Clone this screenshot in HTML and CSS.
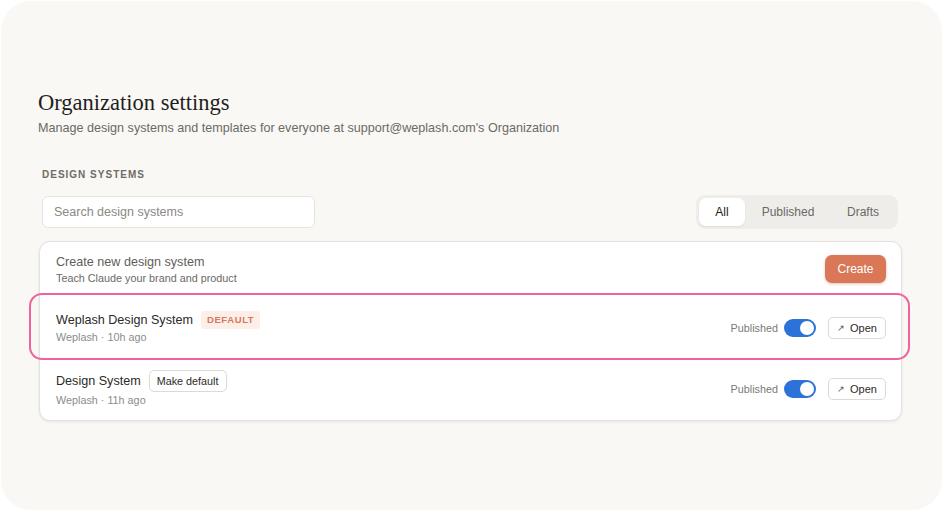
FILE: index.html
```html
<!DOCTYPE html>
<html lang="en">
<head>
<meta charset="utf-8">
<title>Organization settings</title>
<link rel="stylesheet" href="styles.css">
</head>
<body>
<div class="frame">
  <main class="content">
    <header class="page-head">
      <h1 class="title">Organization settings</h1>
      <p class="subtitle">Manage design systems and templates for everyone at support@weplash.com's Organization</p>
    </header>
    <h2 class="section-label">DESIGN SYSTEMS</h2>
    <div class="toolbar">
      <div class="search">Search design systems</div>
      <div class="tabs">
        <span class="tab active">All</span>
        <span class="tab">Published</span>
        <span class="tab">Drafts</span>
      </div>
    </div>
    <div class="card">
      <div class="row row-create">
        <div class="info">
          <div class="name muted">Create new design system</div>
          <div class="meta dark">Teach Claude your brand and product</div>
        </div>
        <button class="btn-create">Create</button>
      </div>
      <div class="row row-hl">
        <div class="info">
          <div class="name-line"><span class="name">Weplash Design System</span><span class="badge">DEFAULT</span></div>
          <div class="meta">Weplash · 10h ago</div>
        </div>
        <div class="actions">
          <span class="pub">Published</span>
          <span class="toggle"><span class="knob"></span></span>
          <button class="btn-open"><span class="arrow">↗</span>Open</button>
        </div>
      </div>
      <div class="row row-last">
        <div class="info">
          <div class="name-line"><span class="name">Design System</span><button class="btn-small">Make default</button></div>
          <div class="meta">Weplash · 11h ago</div>
        </div>
        <div class="actions">
          <span class="pub">Published</span>
          <span class="toggle"><span class="knob"></span></span>
          <button class="btn-open"><span class="arrow">↗</span>Open</button>
        </div>
      </div>
    </div>
  </main>
</div>
</body>
</html>
```
FILE: styles.css
```css
* { box-sizing: border-box; }
html, body { margin: 0; padding: 0; background: #ffffff; }
body {
  width: 943px;
  height: 511px;
  overflow: hidden;
  font-family: "Liberation Sans", Arial, sans-serif;
  padding: 1px 1px 0 1px;
}
.frame {
  height: 509px;
  background: #f9f8f5;
  border-radius: 30px;
  padding: 88px 40px 0 37px;
}
.content { width: 864px; }
.page-head { margin: 0; }
.title {
  margin: 0;
  font-family: "Liberation Serif", "Times New Roman", serif;
  font-weight: 400;
  font-size: 22.5px;
  line-height: 28px;
  color: #1f1e1c;
}
.subtitle {
  margin: 3px 0 0 0;
  font-size: 12.6px;
  line-height: 16px;
  color: #6b6a66;
}
.section-label {
  margin: 33px 0 0 4px;
  font-size: 10px;
  font-weight: 700;
  letter-spacing: 1px;
  color: #6e6c68;
  line-height: 12px;
}
.toolbar {
  margin-top: 14px;
  display: flex;
  justify-content: space-between;
  align-items: center;
}
.search {
  margin-left: 4px;
  width: 273px;
  height: 32px;
  background: #ffffff;
  border: 1px solid #e4e2dd;
  border-radius: 6px;
  padding: 0 11px;
  display: flex;
  align-items: center;
  font-size: 12.5px;
  color: #8a8986;
}
.tabs {
  display: flex;
  align-items: center;
  height: 34px;
  padding: 3px;
  width: 202px;
  background: #efede9;
  border-radius: 9px;
  margin-right: 4px;
}
.tab {
  height: 28px;
  display: flex;
  align-items: center;
  justify-content: center;
  font-size: 12px;
  color: #6b6a66;
  padding: 0;
  border-radius: 7px;
}
.tab:nth-child(2) { width: 86px; }
.tab:nth-child(3) { width: 64px; }
.tab.active {
  background: #ffffff;
  color: #1f1e1c;
  width: 46px;
  box-shadow: 0 1px 2px rgba(0,0,0,0.06);
}
.card {
  margin-top: 12px;
  margin-left: 1px;
  background: #ffffff;
  border: 1px solid #e4e2dd;
  border-radius: 11px;
  box-shadow: 0 1px 3px rgba(0,0,0,0.08);
}
.row {
  display: flex;
  align-items: center;
  justify-content: space-between;
  padding: 0 15px 3px 16px;
  height: 60px;
}
.row-create { height: 55px; padding-bottom: 2px; }
.row-hl { position: relative; height: 63px; }
.row-last { padding-bottom: 4px; }
.row-hl::after {
  content: "";
  position: absolute;
  left: -11px;
  right: -9px;
  top: -4px;
  bottom: 0;
  border: 2px solid #f2609e;
  border-radius: 13px;
  pointer-events: none;
}
.row-hl .meta { margin-top: 1px; }
.info { display: flex; flex-direction: column; }
.name-line { display: flex; align-items: center; }
.name {
  font-size: 12.6px;
  line-height: 18px;
  color: #2b2a28;
}
.name.muted { color: #5f5e5a; }
.meta {
  margin-top: 0;
  font-size: 10.8px;
  line-height: 14px;
  color: #8c8b88;
}
.row-last .meta { margin-top: 1px; }
.meta.dark { color: #6b6a66; margin-top: 0; }
.badge {
  margin-left: 8px;
  height: 18px;
  padding: 0 6px;
  display: inline-flex;
  align-items: center;
  background: #fcefe9;
  color: #d9785a;
  font-size: 9.5px;
  font-weight: 700;
  letter-spacing: 0.6px;
  border-radius: 3px;
}
.btn-small {
  margin-left: 8px;
  height: 22px;
  padding: 0 7px;
  background: #ffffff;
  border: 1px solid #dcdad5;
  border-radius: 5px;
  font-family: inherit;
  font-size: 10.8px;
  color: #2b2a28;
}
.btn-create {
  height: 28px;
  width: 61px;
  border: none;
  border-radius: 7px;
  background: #d97757;
  color: #fff;
  font-family: inherit;
  font-size: 12px;
  box-shadow: 0 1px 3px rgba(160,80,50,0.35);
}
.actions { display: flex; align-items: center; margin-top: 2px; }
.pub { font-size: 10.8px; color: #7a7975; margin-right: 6px; }
.toggle {
  width: 32px;
  height: 18px;
  border-radius: 9px;
  background: #2d72d9;
  display: flex;
  align-items: center;
  justify-content: flex-end;
  padding: 0 2px;
}
.knob {
  width: 14px;
  height: 14px;
  border-radius: 50%;
  background: #fff;
}
.btn-open {
  margin-left: 12px;
  height: 22px;
  width: 58px;
  background: #fff;
  border: 1px solid #dcdad5;
  border-radius: 5px;
  font-family: inherit;
  font-size: 11px;
  color: #2b2a28;
  display: flex;
  align-items: center;
  justify-content: center;
  padding: 0;
}
.arrow { font-size: 9px; margin-right: 5px; color: #555; }
```
